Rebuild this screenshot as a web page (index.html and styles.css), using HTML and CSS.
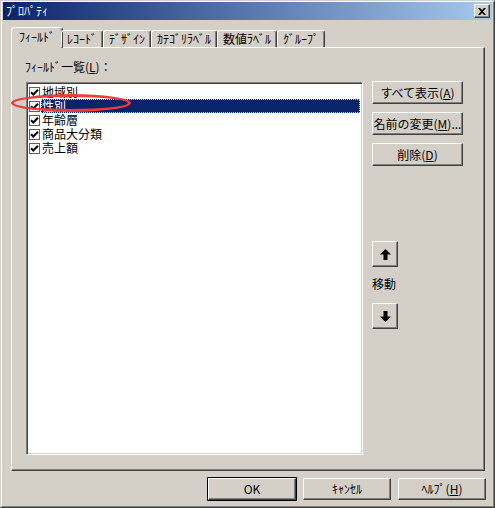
FILE: index.html
```html
<!DOCTYPE html>
<html lang="ja">
<head>
    <meta charset="UTF-8">
    <title>ﾌﾟﾛﾊﾟﾃｨ</title>
    <link rel="stylesheet" href="styles.css">
</head>
<body>
    <div class="window">
        <div class="window-inner">
            <div class="titlebar">
                <span class="title">ﾌﾟﾛﾊﾟﾃｨ</span>
                <span class="close-btn">
                    <svg width="8" height="7" viewBox="0 0 8 7"><path d="M0 0h2l2 2 2-2h2L5 3.5 8 7H6L4 5 2 7H0l3-3.5z" fill="#000"/></svg>
                </span>
            </div>

            <div class="tabs">
                <div class="tab active">ﾌｨｰﾙﾄﾞ</div>
                <div class="tab">ﾚｺｰﾄﾞ</div>
                <div class="tab">ﾃﾞｻﾞｲﾝ</div>
                <div class="tab">ｶﾃｺﾞﾘﾗﾍﾞﾙ</div>
                <div class="tab">数値ﾗﾍﾞﾙ</div>
                <div class="tab">ｸﾞﾙｰﾌﾟ</div>
            </div>

            <div class="panel">
                <div class="list-col">
                    <div class="field-label">ﾌｨｰﾙﾄﾞ一覧(<u>L</u>)：</div>
                    <div class="listbox">
                        <div class="item"><span class="check"></span><span class="item-text">地域別</span></div>
                        <div class="item selected"><span class="check"></span><span class="item-text">性別</span></div>
                        <div class="item"><span class="check"></span><span class="item-text">年齢層</span></div>
                        <div class="item"><span class="check"></span><span class="item-text">商品大分類</span></div>
                        <div class="item"><span class="check"></span><span class="item-text">売上額</span></div>
                    </div>
                </div>

                <div class="side-col">
                    <button class="btn">すべて表示(<u>A</u>)</button>
                    <button class="btn">名前の変更(<u>M</u>)...</button>
                    <button class="btn">削除(<u>D</u>)</button>

                    <div class="move-group">
                        <button class="btn arrow-btn">
                            <svg width="11" height="11" viewBox="0 0 11 11"><path d="M5.5 0L11 5.5H7.5V11h-4V5.5H0z" fill="#000"/></svg>
                        </button>
                        <div class="move-label">移動</div>
                        <button class="btn arrow-btn">
                            <svg width="11" height="11" viewBox="0 0 11 11"><path d="M5.5 11L11 5.5H7.5V0h-4v5.5H0z" fill="#000"/></svg>
                        </button>
                    </div>
                </div>

                <div class="mark"></div>
            </div>

            <div class="footer">
                <button class="btn footer-btn default">OK</button>
                <button class="btn footer-btn">ｷｬﾝｾﾙ</button>
                <button class="btn footer-btn">ﾍﾙﾌﾟ(<u>H</u>)</button>
            </div>
        </div>
    </div>
</body>
</html>
```

FILE: styles.css
```css
body {
    margin: 0;
    font-family: "Noto Sans CJK JP", "DejaVu Sans", sans-serif;
    font-size: 12px;
    color: #000;
    background-color: #d4d0c8;
}

.window {
    width: 495px;
    height: 508px;
    box-sizing: border-box;
    border: 1px solid;
    border-color: #d4d0c8 #404040 #404040 #d4d0c8;
}

.window-inner {
    height: 100%;
    box-sizing: border-box;
    border: 1px solid;
    border-color: #ffffff #808080 #808080 #ffffff;
    padding: 0 1px;
}

.titlebar {
    height: 18px;
    display: flex;
    align-items: center;
    justify-content: space-between;
    padding: 0 2px 0 3px;
    background: linear-gradient(to right, #0a246a, #a6caf0);
}

.title {
    color: #fff;
    font-size: 12px;
    line-height: 18px;
}

.close-btn {
    width: 16px;
    height: 14px;
    box-sizing: border-box;
    display: flex;
    align-items: center;
    justify-content: center;
    background-color: #d4d0c8;
    border: 1px solid;
    border-color: #ffffff #404040 #404040 #ffffff;
    box-shadow: inset -1px -1px 0 #808080;
}

.tabs {
    display: flex;
    align-items: flex-end;
    margin-top: 8px;
    padding-left: 8px;
    height: 19px;
    position: relative;
    z-index: 1;
}

.tab {
    height: 17px;
    box-sizing: border-box;
    padding: 0 5px;
    line-height: 15px;
    border: 1px solid;
    border-bottom: none;
    border-color: #ffffff #404040 transparent #ffffff;
    border-radius: 3px 3px 0 0;
    box-shadow: inset -1px 0 0 #808080;
    white-space: nowrap;
}

.tab.active {
    height: 21px;
    margin-bottom: -1px;
    padding: 0 7px;
    line-height: 18px;
    margin-right: -2px;
    background-color: #d4d0c8;
}

.panel {
    position: relative;
    margin-left: 8px;
    width: 474px;
    height: 424px;
    box-sizing: border-box;
    border: 1px solid;
    border-color: #ffffff #404040 #404040 #ffffff;
    box-shadow: inset -1px -1px 0 #808080;
    display: flex;
    padding: 12px 0 0 12px;
}

.list-col {
    width: 338px;
}

.field-label {
    line-height: 14px;
    height: 14px;
    padding-left: 1px;
    margin-bottom: 8px;
}

.listbox {
    width: 337px;
    height: 373px;
    box-sizing: border-box;
    margin-left: 2px;
    background-color: #fff;
    border: 1px solid;
    border-color: #808080 #ffffff #ffffff #808080;
    box-shadow: inset 1px 1px 0 #404040, inset -1px -1px 0 #d4d0c8;
    padding: 2px 2px 0 2px;
}

.item {
    display: flex;
    align-items: center;
    height: 14px;
}

.check {
    width: 11px;
    height: 11px;
    box-sizing: border-box;
    margin-right: 1px;
    border: 1px solid #606060;
    background: #fff url("data:image/svg+xml;utf8,<svg xmlns='http://www.w3.org/2000/svg' width='9' height='9'><path d='M1 4.2l2.3 2.3L8 1.8' stroke='black' stroke-width='2' fill='none'/></svg>") no-repeat center;
}

.item-text {
    line-height: 14px;
    height: 14px;
    padding: 0 1px;
}

.item.selected .item-text {
    flex: 1;
    color: #fff;
    background-color: #0a246a;
    outline: 1px dotted #d4d0c8;
    outline-offset: -1px;
}

.side-col {
    display: flex;
    flex-direction: column;
    margin-left: 10px;
    padding-top: 21px;
}

.btn {
    font-family: inherit;
    font-size: 12px;
    color: #000;
    background-color: #d4d0c8;
    border: 1px solid;
    border-color: #ffffff #404040 #404040 #ffffff;
    box-shadow: inset -1px -1px 0 #808080;
    padding: 0;
    width: 91px;
    height: 23px;
    margin-bottom: 8px;
    line-height: 20px;
}

.move-group {
    margin-top: 67px;
    display: flex;
    flex-direction: column;
}

.arrow-btn {
    width: 26px;
    height: 26px;
    display: flex;
    align-items: center;
    justify-content: center;
    margin-bottom: 0;
}

.move-label {
    margin: 10px 0 12px;
    line-height: 14px;
}

.mark {
    position: absolute;
    left: -1px;
    top: 46px;
    width: 114px;
    height: 12px;
    border: 3px solid #ee3c3c;
    border-radius: 50%;
}

.footer {
    display: flex;
    justify-content: flex-end;
    gap: 7px;
    padding-right: 6px;
    margin-top: 7px;
}

.footer-btn {
    width: 88px;
    height: 22px;
    margin: 0;
}

.default {
    outline: 1px solid #000;
}
```
